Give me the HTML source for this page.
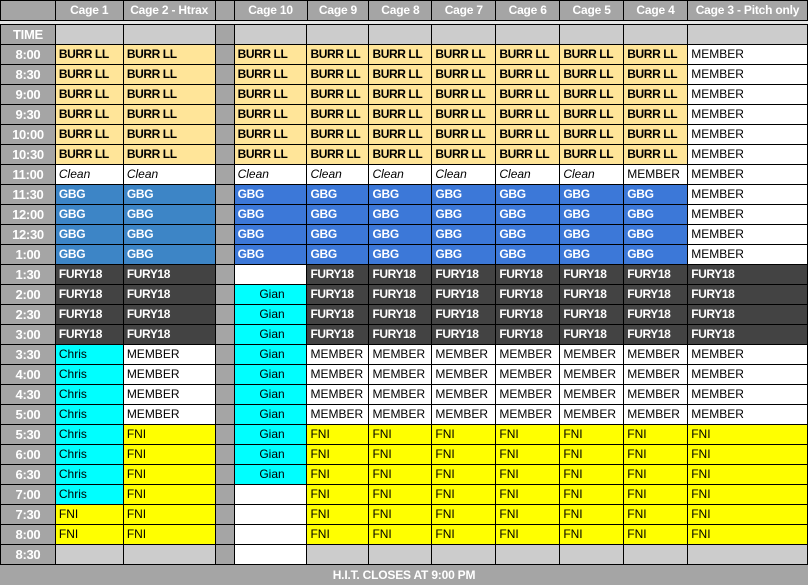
<!DOCTYPE html>
<html><head><meta charset="utf-8"><style>
body{margin:0;background:#fff;width:808px;height:586px;overflow:hidden;font-family:"Liberation Sans",sans-serif;font-size:12px}
table{border-collapse:collapse;table-layout:fixed;position:absolute;left:0}
td{border:1px solid #000;height:19px;padding:0 0 0 3px;white-space:nowrap;overflow:hidden;line-height:19px}
.h td{background:#a5a5a5;color:#fff;font-weight:bold;text-align:center;padding:0;font-size:12px;letter-spacing:-0.2px}
td.t{background:#a5a5a5;color:#fff;font-weight:bold;text-align:center;padding:0;font-size:13px;border-color:#000;letter-spacing:-0.3px}
.B{background:#ffe599;font-weight:bold;letter-spacing:-0.4px}
.C{font-style:italic}
.G{background:#3c78d8;color:#fff;font-weight:bold;letter-spacing:-0.3px}
.g{background:#3d85c6;color:#fff;font-weight:bold;letter-spacing:-0.3px}
.F{background:#434343;color:#fff;font-weight:bold;letter-spacing:-0.4px}
.Y{background:#ffff00}
.Q{background:#00ffff}
.N{background:#00ffff;text-align:center}
.S{background:#a5a5a5}
.E{background:#cccccc}
#top{top:0}
#main{top:24px}
#foot{position:absolute;top:564px;left:0;width:808px;height:20px;background:#a5a5a5;color:#fff;font-weight:bold;text-align:center;line-height:20px;font-size:12px;border-top:1px solid #000;letter-spacing:-0.2px}
#gap{position:absolute;top:21px;left:0;width:808px;height:3px;background:#e6e6e6}
</style></head><body>
<table id="top"><colgroup><col style="width:55px"><col style="width:68px"><col style="width:92px"><col style="width:19px"><col style="width:73px"><col style="width:62px"><col style="width:63px"><col style="width:64px"><col style="width:64px"><col style="width:64px"><col style="width:64px"><col style="width:120px"></colgroup>
<tr class="h"><td></td><td>Cage 1</td><td>Cage 2 - Htrax</td><td></td><td>Cage 10</td><td>Cage 9</td><td>Cage 8</td><td>Cage 7</td><td>Cage 6</td><td>Cage 5</td><td>Cage 4</td><td>Cage 3 - Pitch only</td></tr>
</table>
<div id="gap"></div>
<table id="main"><colgroup><col style="width:55px"><col style="width:68px"><col style="width:92px"><col style="width:19px"><col style="width:73px"><col style="width:62px"><col style="width:63px"><col style="width:64px"><col style="width:64px"><col style="width:64px"><col style="width:64px"><col style="width:120px"></colgroup>
<tr><td class="t">TIME</td><td class="E"></td><td class="E"></td><td class="S"></td><td class="E"></td><td class="E"></td><td class="E"></td><td class="E"></td><td class="E"></td><td class="E"></td><td class="E"></td><td class="E"></td></tr>
<tr><td class="t">8:00</td><td class="B">BURR LL</td><td class="B">BURR LL</td><td class="S"></td><td class="B">BURR LL</td><td class="B">BURR LL</td><td class="B">BURR LL</td><td class="B">BURR LL</td><td class="B">BURR LL</td><td class="B">BURR LL</td><td class="B">BURR LL</td><td>MEMBER</td></tr>
<tr><td class="t">8:30</td><td class="B">BURR LL</td><td class="B">BURR LL</td><td class="S"></td><td class="B">BURR LL</td><td class="B">BURR LL</td><td class="B">BURR LL</td><td class="B">BURR LL</td><td class="B">BURR LL</td><td class="B">BURR LL</td><td class="B">BURR LL</td><td>MEMBER</td></tr>
<tr><td class="t">9:00</td><td class="B">BURR LL</td><td class="B">BURR LL</td><td class="S"></td><td class="B">BURR LL</td><td class="B">BURR LL</td><td class="B">BURR LL</td><td class="B">BURR LL</td><td class="B">BURR LL</td><td class="B">BURR LL</td><td class="B">BURR LL</td><td>MEMBER</td></tr>
<tr><td class="t">9:30</td><td class="B">BURR LL</td><td class="B">BURR LL</td><td class="S"></td><td class="B">BURR LL</td><td class="B">BURR LL</td><td class="B">BURR LL</td><td class="B">BURR LL</td><td class="B">BURR LL</td><td class="B">BURR LL</td><td class="B">BURR LL</td><td>MEMBER</td></tr>
<tr><td class="t">10:00</td><td class="B">BURR LL</td><td class="B">BURR LL</td><td class="S"></td><td class="B">BURR LL</td><td class="B">BURR LL</td><td class="B">BURR LL</td><td class="B">BURR LL</td><td class="B">BURR LL</td><td class="B">BURR LL</td><td class="B">BURR LL</td><td>MEMBER</td></tr>
<tr><td class="t">10:30</td><td class="B">BURR LL</td><td class="B">BURR LL</td><td class="S"></td><td class="B">BURR LL</td><td class="B">BURR LL</td><td class="B">BURR LL</td><td class="B">BURR LL</td><td class="B">BURR LL</td><td class="B">BURR LL</td><td class="B">BURR LL</td><td>MEMBER</td></tr>
<tr><td class="t">11:00</td><td class="C">Clean</td><td class="C">Clean</td><td class="S"></td><td class="C">Clean</td><td class="C">Clean</td><td class="C">Clean</td><td class="C">Clean</td><td class="C">Clean</td><td class="C">Clean</td><td>MEMBER</td><td>MEMBER</td></tr>
<tr><td class="t">11:30</td><td class="g">GBG</td><td class="g">GBG</td><td class="S"></td><td class="G">GBG</td><td class="G">GBG</td><td class="G">GBG</td><td class="G">GBG</td><td class="G">GBG</td><td class="G">GBG</td><td class="G">GBG</td><td>MEMBER</td></tr>
<tr><td class="t">12:00</td><td class="g">GBG</td><td class="g">GBG</td><td class="S"></td><td class="G">GBG</td><td class="G">GBG</td><td class="G">GBG</td><td class="G">GBG</td><td class="G">GBG</td><td class="G">GBG</td><td class="G">GBG</td><td>MEMBER</td></tr>
<tr><td class="t">12:30</td><td class="g">GBG</td><td class="g">GBG</td><td class="S"></td><td class="G">GBG</td><td class="G">GBG</td><td class="G">GBG</td><td class="G">GBG</td><td class="G">GBG</td><td class="G">GBG</td><td class="G">GBG</td><td>MEMBER</td></tr>
<tr><td class="t">1:00</td><td class="g">GBG</td><td class="g">GBG</td><td class="S"></td><td class="G">GBG</td><td class="G">GBG</td><td class="G">GBG</td><td class="G">GBG</td><td class="G">GBG</td><td class="G">GBG</td><td class="G">GBG</td><td>MEMBER</td></tr>
<tr><td class="t">1:30</td><td class="F">FURY18</td><td class="F">FURY18</td><td class="S"></td><td></td><td class="F">FURY18</td><td class="F">FURY18</td><td class="F">FURY18</td><td class="F">FURY18</td><td class="F">FURY18</td><td class="F">FURY18</td><td class="F">FURY18</td></tr>
<tr><td class="t">2:00</td><td class="F">FURY18</td><td class="F">FURY18</td><td class="S"></td><td class="N">Gian</td><td class="F">FURY18</td><td class="F">FURY18</td><td class="F">FURY18</td><td class="F">FURY18</td><td class="F">FURY18</td><td class="F">FURY18</td><td class="F">FURY18</td></tr>
<tr><td class="t">2:30</td><td class="F">FURY18</td><td class="F">FURY18</td><td class="S"></td><td class="N">Gian</td><td class="F">FURY18</td><td class="F">FURY18</td><td class="F">FURY18</td><td class="F">FURY18</td><td class="F">FURY18</td><td class="F">FURY18</td><td class="F">FURY18</td></tr>
<tr><td class="t">3:00</td><td class="F">FURY18</td><td class="F">FURY18</td><td class="S"></td><td class="N">Gian</td><td class="F">FURY18</td><td class="F">FURY18</td><td class="F">FURY18</td><td class="F">FURY18</td><td class="F">FURY18</td><td class="F">FURY18</td><td class="F">FURY18</td></tr>
<tr><td class="t">3:30</td><td class="Q">Chris</td><td>MEMBER</td><td class="S"></td><td class="N">Gian</td><td>MEMBER</td><td>MEMBER</td><td>MEMBER</td><td>MEMBER</td><td>MEMBER</td><td>MEMBER</td><td>MEMBER</td></tr>
<tr><td class="t">4:00</td><td class="Q">Chris</td><td>MEMBER</td><td class="S"></td><td class="N">Gian</td><td>MEMBER</td><td>MEMBER</td><td>MEMBER</td><td>MEMBER</td><td>MEMBER</td><td>MEMBER</td><td>MEMBER</td></tr>
<tr><td class="t">4:30</td><td class="Q">Chris</td><td>MEMBER</td><td class="S"></td><td class="N">Gian</td><td>MEMBER</td><td>MEMBER</td><td>MEMBER</td><td>MEMBER</td><td>MEMBER</td><td>MEMBER</td><td>MEMBER</td></tr>
<tr><td class="t">5:00</td><td class="Q">Chris</td><td>MEMBER</td><td class="S"></td><td class="N">Gian</td><td>MEMBER</td><td>MEMBER</td><td>MEMBER</td><td>MEMBER</td><td>MEMBER</td><td>MEMBER</td><td>MEMBER</td></tr>
<tr><td class="t">5:30</td><td class="Q">Chris</td><td class="Y">FNI</td><td class="S"></td><td class="N">Gian</td><td class="Y">FNI</td><td class="Y">FNI</td><td class="Y">FNI</td><td class="Y">FNI</td><td class="Y">FNI</td><td class="Y">FNI</td><td class="Y">FNI</td></tr>
<tr><td class="t">6:00</td><td class="Q">Chris</td><td class="Y">FNI</td><td class="S"></td><td class="N">Gian</td><td class="Y">FNI</td><td class="Y">FNI</td><td class="Y">FNI</td><td class="Y">FNI</td><td class="Y">FNI</td><td class="Y">FNI</td><td class="Y">FNI</td></tr>
<tr><td class="t">6:30</td><td class="Q">Chris</td><td class="Y">FNI</td><td class="S"></td><td class="N">Gian</td><td class="Y">FNI</td><td class="Y">FNI</td><td class="Y">FNI</td><td class="Y">FNI</td><td class="Y">FNI</td><td class="Y">FNI</td><td class="Y">FNI</td></tr>
<tr><td class="t">7:00</td><td class="Q">Chris</td><td class="Y">FNI</td><td class="S"></td><td></td><td class="Y">FNI</td><td class="Y">FNI</td><td class="Y">FNI</td><td class="Y">FNI</td><td class="Y">FNI</td><td class="Y">FNI</td><td class="Y">FNI</td></tr>
<tr><td class="t">7:30</td><td class="Y">FNI</td><td class="Y">FNI</td><td class="S"></td><td></td><td class="Y">FNI</td><td class="Y">FNI</td><td class="Y">FNI</td><td class="Y">FNI</td><td class="Y">FNI</td><td class="Y">FNI</td><td class="Y">FNI</td></tr>
<tr><td class="t">8:00</td><td class="Y">FNI</td><td class="Y">FNI</td><td class="S"></td><td></td><td class="Y">FNI</td><td class="Y">FNI</td><td class="Y">FNI</td><td class="Y">FNI</td><td class="Y">FNI</td><td class="Y">FNI</td><td class="Y">FNI</td></tr>
<tr><td class="t">8:30</td><td class="E"></td><td class="E"></td><td class="S"></td><td></td><td class="E"></td><td class="E"></td><td class="E"></td><td class="E"></td><td class="E"></td><td class="E"></td><td class="E"></td></tr>
</table>
<div id="foot">H.I.T. CLOSES AT 9:00 PM</div>
</body></html>
